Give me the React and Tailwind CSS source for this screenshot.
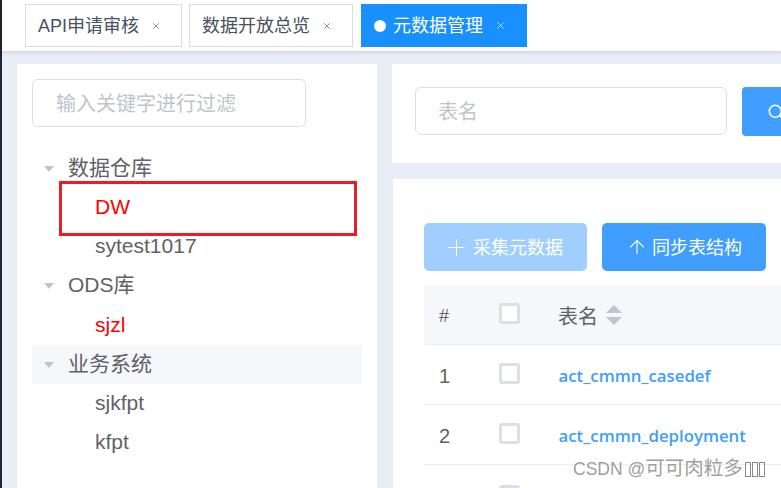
import { Plus, ArrowUp, Search, X } from "lucide-react";

const cjk = "font-['Liberation_Sans','Noto_Sans_CJK_SC',sans-serif]";

const tree = [
  { label: "数据仓库", parent: true },
  { label: "DW", red: true },
  { label: "sytest1017" },
  { label: "ODS库", parent: true },
  { label: "sjzl", red: true },
  { label: "业务系统", parent: true, hover: true },
  { label: "sjkfpt" },
  { label: "kfpt" },
];

function Tab({ label, active }) {
  if (active) {
    return (
      <div className="flex h-[43px] w-[166px] items-center bg-[#1890ff] pl-[13px] text-[18px] text-white">
        <span className="mr-[7px] h-[12px] w-[12px] rounded-full bg-white" />
        <span className="translate-y-[1px]">{label}</span>
        <X className="ml-[12px] h-[11px] w-[11px]" strokeWidth={1.5} />
      </div>
    );
  }
  return (
    <div className="flex h-[43px] items-center border border-[#d8dce5] bg-white pl-[12px] text-[18px] text-[#495060]">
      <span className="translate-y-[1px]">{label}</span>
      <X className="ml-[12px] mr-[20px] h-[10px] w-[10px]" strokeWidth={1.5} />
    </div>
  );
}

function TreeRow({ item }) {
  return (
    <div className={`flex h-[39.2px] items-center ${item.hover ? "bg-[#f5f7fa]" : ""}`}>
      {item.parent ? (
        <>
          <span className="ml-[12px] mr-[14px] h-0 w-0 border-x-[5.5px] border-t-[6px] border-x-transparent border-t-[#c0c4cc]" />
          <span className="-translate-y-[1px] text-[21px] text-[#606266]">{item.label}</span>
        </>
      ) : (
        <span className={`ml-[63px] -translate-y-[1px] text-[21px] ${item.red ? "text-[#ff0000]" : "text-[#606266]"}`}>{item.label}</span>
      )}
    </div>
  );
}

function Checkbox() {
  return <span className="block h-[21px] w-[21px] -translate-y-[1px] rounded-[3px] border-[3px] border-[#dcdfe6] bg-white" />;
}

function TableRow({ n, name }) {
  return (
    <div className="flex h-[60px] shrink-0 items-center border-b border-[#ebeef5] bg-white text-[#606266]">
      <span className="w-[75px] translate-y-[1px] pl-[15px] text-[20px]">{n}</span>
      <span className="w-[59.5px]"><Checkbox /></span>
      <span className="translate-y-[1px] font-['Open_Sans',sans-serif] text-[16.8px] font-semibold text-[#409eff]">{name}</span>
    </div>
  );
}

export default function App() {
  return (
    <div className={`relative flex h-[488px] w-[781px] flex-col overflow-hidden bg-[#e9edf5] ${cjk}`}>
      <div className="absolute bottom-0 left-0 top-0 z-20 w-[2px] bg-[#1f2233]" />

      <header className="flex h-[51px] shrink-0 gap-[7px] bg-white pl-[25px] pt-[4px] shadow-[0_1px_4px_rgba(0,21,41,0.15)]">
        <Tab label="API申请审核" />
        <div className="mr-[1px]">
          <Tab label="数据开放总览" />
        </div>
        <Tab label="元数据管理" active />
      </header>

      <main className="flex min-h-0 flex-1 pl-[17px] pt-[13px]">
        <aside className="w-[360px] shrink-0 bg-white pl-[15px] pt-[15px]">
          <div className="flex h-[48px] w-[274px] items-center rounded-[6px] border border-[#dcdfe6] pl-[23px] text-[20px] text-[#c0c4cc]">
            <span className="translate-y-[1px]">输入关键字进行过滤</span>
          </div>
          <div className="mt-[22px] w-[330px]">
            {tree.map((item) => (
              <TreeRow key={item.label} item={item} />
            ))}
          </div>
        </aside>

        <section className="ml-[15px] flex w-[500px] shrink-0 flex-col">
          <div className="flex h-[99px] shrink-0 items-start gap-[15px] bg-white pl-[23px] pt-[23px]">
            <div className="flex h-[48px] w-[312px] items-center rounded-[6px] border border-[#dcdfe6] pl-[22px] text-[20px] text-[#c0c4cc]">
              <span className="translate-y-[1px]">表名</span>
            </div>
            <div className="flex h-[49px] w-[100px] items-center rounded-[4px] bg-[#409eff] pl-[25px] text-white">
              <Search className="h-[18px] w-[18px]" strokeWidth={2} />
            </div>
          </div>

          <div className="ml-[1px] mt-[16px] flex min-h-0 flex-1 flex-col bg-white pl-[31px] pt-[44px]">
            <div className="flex gap-[15px]">
              <button className="flex h-[48px] w-[163px] items-center gap-[3px] rounded-[5px] bg-[#a0cfff] pl-[19px] text-[18px] text-white">
                <Plus className="h-[27px] w-[27px]" strokeWidth={0.9} />
                <span className="translate-y-[1px]">采集元数据</span>
              </button>
              <button className="flex h-[48px] w-[164px] items-center gap-[4px] rounded-[5px] bg-[#409eff] pl-[24px] text-[18px] text-white">
                <ArrowUp className="h-[22px] w-[22px]" strokeWidth={1.2} />
                <span className="translate-y-[1px]">同步表结构</span>
              </button>
            </div>

            <div className="mt-[14px] flex h-[60px] shrink-0 items-center border-b border-[#ebeef5] bg-[#f5f7fa] text-[#606266]">
              <span className="w-[75px] translate-y-[2px] pl-[15px] text-[18px]">#</span>
              <span className="w-[59px]"><Checkbox /></span>
              <span className="translate-y-[2px] text-[20px]">表名</span>
              <span className="ml-[8px] flex flex-col gap-[4px]">
                <span className="h-0 w-0 border-x-[8px] border-b-[8px] border-x-transparent border-b-[#c0c4cc]" />
                <span className="h-0 w-0 border-x-[8px] border-t-[8px] border-x-transparent border-t-[#c0c4cc]" />
              </span>
            </div>
            <TableRow n="1" name="act_cmmn_casedef" />
            <TableRow n="2" name="act_cmmn_deployment" />
            <div className="flex h-[60px] shrink-0 items-center bg-white pt-[3px]">
              <span className="ml-[75px]"><Checkbox /></span>
            </div>
          </div>
        </section>
      </main>

      {/* screenshot annotation */}
      <div className="absolute left-[59px] top-[181px] h-[55px] w-[298px] border-[3px] border-[#ed1c24]" />

      {/* csdn watermark, the last three characters are missing-glyph boxes */}
      <div className="absolute left-[573px] top-[457px] flex h-[24px] items-center text-[17.5px] text-[#a0a0a0]">
        <span>CSDN @</span>
        <span className="text-[19.5px]">可可肉粒多</span>
        <span className="ml-[2px] flex gap-[1px]">
          <span className="h-[15px] w-[6px] border border-[#8a8a8a]" />
          <span className="h-[15px] w-[6px] border border-[#8a8a8a]" />
          <span className="h-[15px] w-[6px] border border-[#8a8a8a]" />
        </span>
      </div>
    </div>
  );
}
